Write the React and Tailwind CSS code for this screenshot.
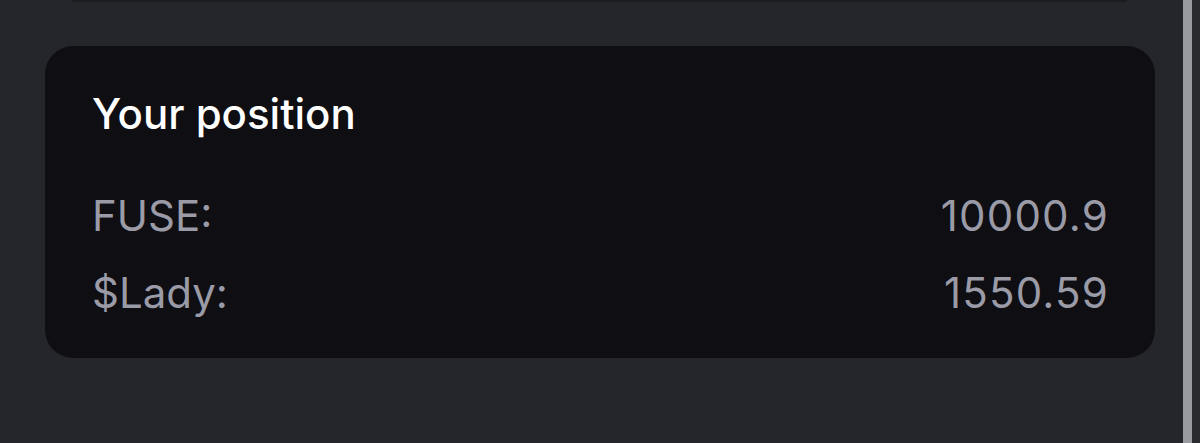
import React from "react";

const rows = [
  { label: "FUSE:", value: "10000.9" },
  { label: "$Lady:", value: "1550.59" },
];

function PositionCard() {
  return (
    <section className="mt-[44px] ml-[45px] mr-[28px] h-[312px] rounded-[28px] bg-[#0e0e13] px-[47px] pt-[43px]">
      <h2 className="text-[42px] leading-[50px] font-medium text-white">
        Your position
      </h2>
      <div className="mt-[52px] flex flex-col gap-[27px]">
        {rows.map((r) => (
          <div
            key={r.label}
            className="flex items-center justify-between text-[42px] leading-[50px] text-[#9a9ba6]"
          >
            <span>{r.label}</span>
            <span className="tracking-[1.2px] -mr-[1px]">{r.value}</span>
          </div>
        ))}
      </div>
    </section>
  );
}

export default function App() {
  return (
    <div
      className="flex h-[443px] w-[1200px] overflow-hidden bg-[#25262b]"
      style={{ fontFamily: "Inter, 'Noto Sans', sans-serif" }}
    >
      <main className="flex-1">
        {/* bottom edge of the card above */}
        <div className="ml-[72px] mr-[56px] h-[2px] bg-[#1b1c20]" />
        <PositionCard />
      </main>
      <div className="flex w-[17px]">
        <div className="w-[9px] bg-[#9a9ba0]" />
        <div className="flex-1 bg-[#2a2b2f]" />
      </div>
    </div>
  );
}
